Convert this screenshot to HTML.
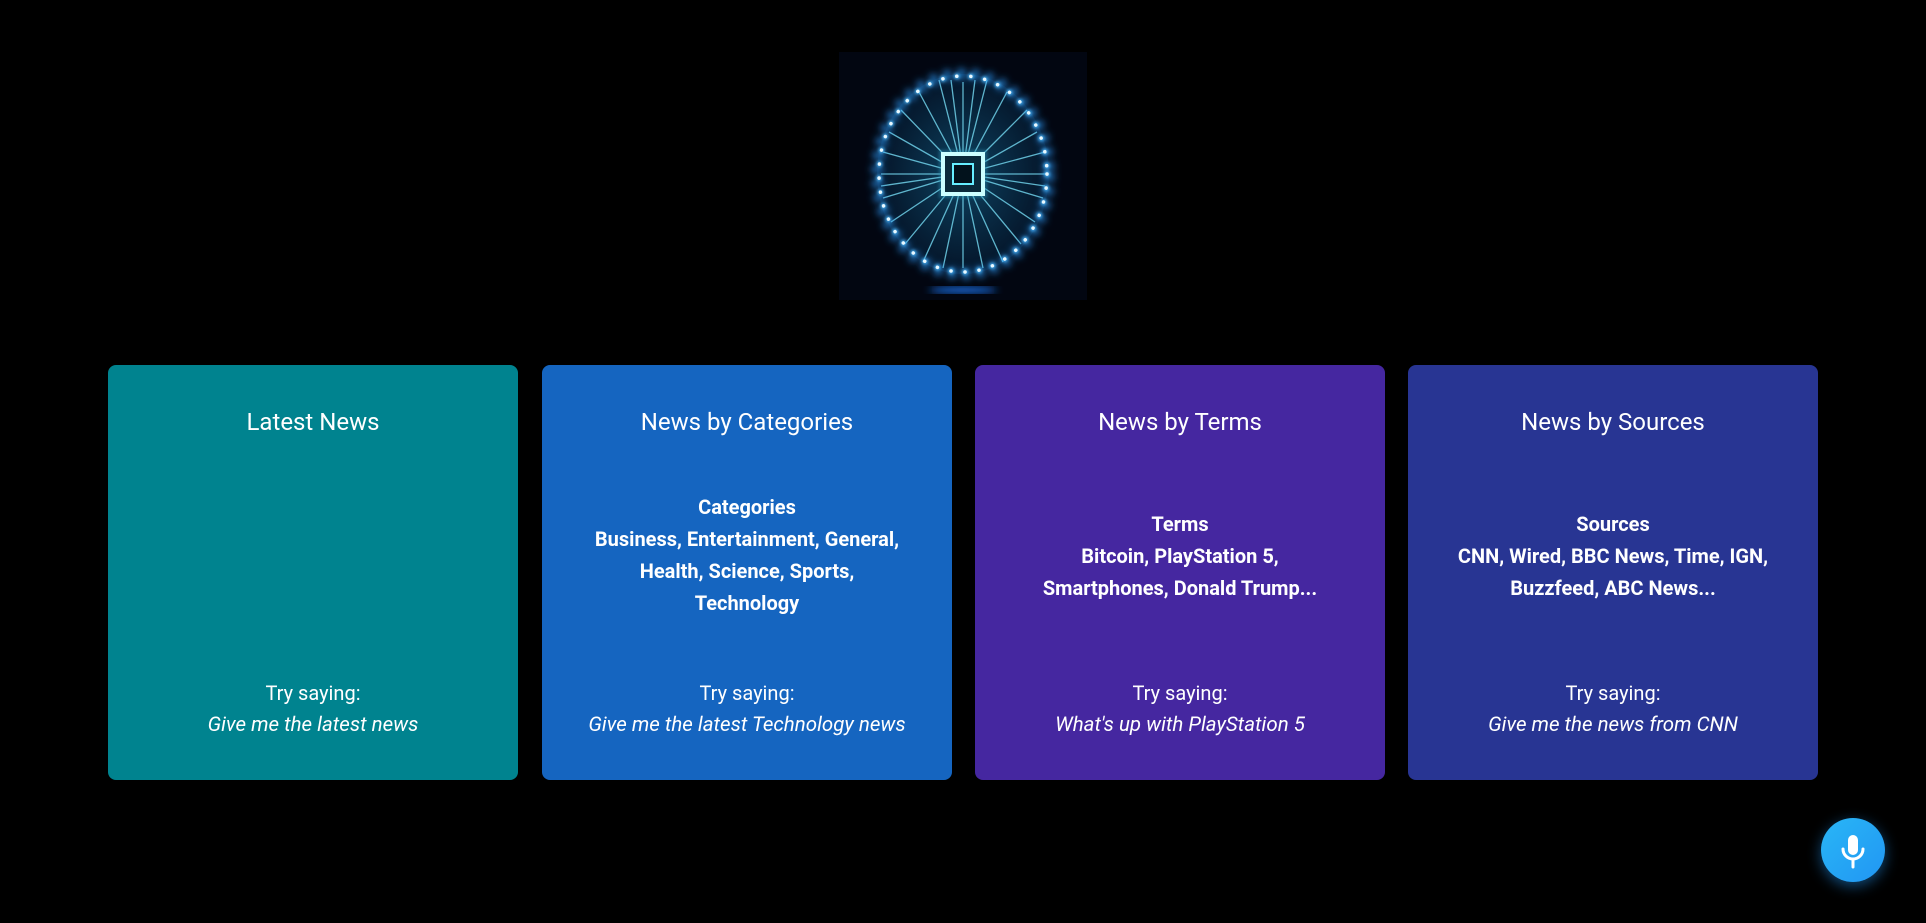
<!DOCTYPE html>
<html><head><meta charset="utf-8"><style>
*{margin:0;padding:0;box-sizing:border-box}
body{width:1926px;height:923px;background:#000;overflow:hidden;font-family:"Roboto","Liberation Sans",sans-serif;color:#fff;position:relative}
.logo{position:absolute;left:839px;top:52px;width:248px;height:248px;background:#020611}
.card{position:absolute;top:365px;width:410px;height:415px;border-radius:8px;text-align:center}
.t{position:absolute;left:0;right:0;font-size:24px;top:43px}
.b{position:absolute;left:0;right:0;font-weight:bold;font-size:20px;line-height:32px;white-space:nowrap}
.ts{position:absolute;top:312px;left:0;right:0;font-size:20px;line-height:32px}
.ts i{display:block;font-size:20.5px}
.mic{position:absolute;left:1821px;top:818px;width:64px;height:64px;border-radius:50%;background:linear-gradient(135deg,#29b6f6,#2196f3);box-shadow:0 4px 14px rgba(33,150,243,.5)}
</style></head><body>
<div class="logo"><svg width="248" height="248" viewBox="0 0 248 248">
<defs><radialGradient id="g" cx="50%" cy="50%" r="50%"><stop offset="0" stop-color="#0d4260"/><stop offset="1" stop-color="#041428"/></radialGradient>
<filter id="bl"><feGaussianBlur stdDeviation="4"/></filter><filter id="b2"><feGaussianBlur stdDeviation="1.5"/></filter></defs>
<ellipse cx="124" cy="122" rx="86" ry="100" fill="url(#g)"/>
<g stroke="#6fd0e8" stroke-width="1.3" opacity=".85">
<line x1="124" y1="122" x2="124" y2="30"/><line x1="124" y1="122" x2="80" y2="40"/><line x1="124" y1="122" x2="168" y2="40"/>
<line x1="124" y1="122" x2="50" y2="80"/><line x1="124" y1="122" x2="198" y2="80"/><line x1="124" y1="122" x2="42" y2="122"/>
<line x1="124" y1="122" x2="208" y2="122"/><line x1="124" y1="122" x2="52" y2="170"/><line x1="124" y1="122" x2="196" y2="170"/>
<line x1="124" y1="122" x2="84" y2="210"/><line x1="124" y1="122" x2="164" y2="210"/><line x1="124" y1="122" x2="124" y2="216"/>
<line x1="124" y1="122" x2="100" y2="28"/><line x1="124" y1="122" x2="148" y2="28"/><line x1="124" y1="122" x2="62" y2="58"/><line x1="124" y1="122" x2="188" y2="58"/>
<line x1="124" y1="122" x2="44" y2="100"/><line x1="124" y1="122" x2="206" y2="100"/><line x1="124" y1="122" x2="44" y2="146"/><line x1="124" y1="122" x2="204" y2="146"/>
<line x1="124" y1="122" x2="66" y2="192"/><line x1="124" y1="122" x2="182" y2="192"/><line x1="124" y1="122" x2="104" y2="216"/><line x1="124" y1="122" x2="144" y2="216"/>
<line x1="124" y1="122" x2="112" y2="28"/><line x1="124" y1="122" x2="136" y2="28"/><line x1="124" y1="122" x2="42" y2="134"/><line x1="124" y1="122" x2="206" y2="134"/>
</g>
<ellipse cx="124" cy="122" rx="86" ry="100" fill="none" stroke="#2a9dff" stroke-width="10" stroke-dasharray="6 8" filter="url(#bl)"/>
<ellipse cx="124" cy="122" rx="84" ry="98" fill="none" stroke="#49b8ff" stroke-width="6" stroke-linecap="round" stroke-dasharray="0.1 14" filter="url(#b2)"/>
<ellipse cx="124" cy="122" rx="84" ry="98" fill="none" stroke="#e8f8ff" stroke-width="3.5" stroke-linecap="round" stroke-dasharray="0.1 14"/>
<rect x="100" y="98" width="48" height="48" fill="#2a90b0" opacity=".5" filter="url(#b2)"/>
<rect x="104" y="102" width="40" height="40" fill="#0a2a3a" stroke="#cff" stroke-width="4"/>
<rect x="114" y="112" width="20" height="20" fill="#02121c" stroke="#6ef" stroke-width="2"/>
<ellipse cx="124" cy="238" rx="34" ry="3" fill="#1e7bff" filter="url(#bl)"/>
</svg></div>
<div class="card" style="left:108px;background:#00838f"><div class="t">Latest News</div>
<div class="ts">Try saying:<i>Give me the latest news</i></div></div>
<div class="card" style="left:542px;background:#1565c0"><div class="t">News by Categories</div>
<div class="b" style="top:126px">Categories<br>Business, Entertainment, General,<br>Health, Science, Sports,<br>Technology</div>
<div class="ts">Try saying:<i>Give me the latest Technology news</i></div></div>
<div class="card" style="left:975px;background:#4527a0"><div class="t">News by Terms</div>
<div class="b" style="top:143px">Terms<br>Bitcoin, PlayStation 5,<br>Smartphones, Donald Trump...</div>
<div class="ts">Try saying:<i>What's up with PlayStation 5</i></div></div>
<div class="card" style="left:1408px;background:#283593"><div class="t">News by Sources</div>
<div class="b" style="top:143px">Sources<br>CNN, Wired, BBC News, Time, IGN,<br>Buzzfeed, ABC News...</div>
<div class="ts">Try saying:<i>Give me the news from CNN</i></div></div>
<div class="mic"><svg width="64" height="64" viewBox="0 0 64 64"><rect x="27" y="17" width="10" height="20" rx="5" fill="#fff"/><path d="M22 31a10 10 0 0 0 20 0M32 41v8" stroke="#fff" stroke-width="3" fill="none" stroke-linecap="round"/></svg></div>
</body></html>
